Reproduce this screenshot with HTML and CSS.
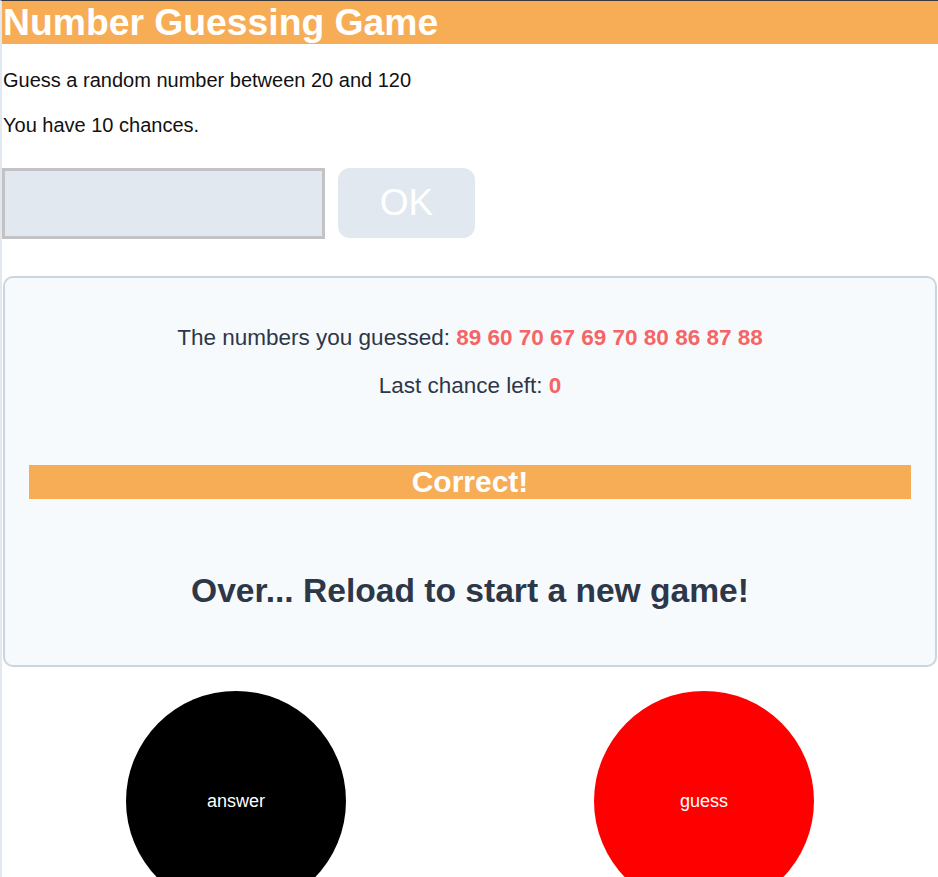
FILE: index.html
```html
<!DOCTYPE html>
<html lang="en">
<head>
<meta charset="utf-8">
<title>Number Guessing Game</title>
<link rel="stylesheet" href="styles.css">
</head>
<body>
<h1 class="title">Number Guessing Game</h1>
<p class="intro">Guess a random number between 20 and 120</p>
<p class="intro second">You have 10 chances.</p>
<div class="form">
  <input class="guess-input" type="text">
  <button class="ok-btn">OK</button>
</div>
<section class="panel">
  <p class="stat">The numbers you guessed: <span class="hl">89 60 70 67 69 70 80 86 87 88</span></p>
  <p class="stat">Last chance left: <span class="hl">0</span></p>
  <div class="result">Correct!</div>
  <h2 class="over">Over... Reload to start a new game!</h2>
</section>
<div class="circles">
  <div class="cell"><div class="circle answer">answer</div></div>
  <div class="cell"><div class="circle guess">guess</div></div>
</div>
</body>
</html>
```
FILE: styles.css
```css
html, body {
  margin: 0;
  padding: 0;
}
body {
  font-family: "Liberation Sans", Arial, sans-serif;
  color: #111;
  border-top: 1px solid #3a3a3a;
  border-left: 2px solid #e2e8f0;
  min-height: 876px;
  box-sizing: border-box;
  overflow: hidden;
}
.title {
  margin: 0;
  background: #f6ad55;
  color: #fff;
  font-size: 37.3px;
  font-weight: bold;
  line-height: 43px;
  height: 43px;
  padding-left: 1px;
}
.intro {
  font-size: 20px;
  margin: 25px 0 0 1px;
  line-height: 22px;
}
.intro.second {
  margin-top: 23px;
}
.form {
  display: flex;
  gap: 13px;
  margin-top: 32px;
}
.guess-input {
  width: 323px;
  height: 71px;
  box-sizing: border-box;
  border: 3px solid #c3c3c6;
  background: #e2e8f0;
  margin: 0;
  font-size: 24px;
}
.ok-btn {
  width: 137px;
  height: 70px;
  border: none;
  border-radius: 12px;
  background: #e2e8f0;
  color: #fff;
  font-family: "Liberation Sans", Arial, sans-serif;
  font-size: 37px;
  padding: 0;
}
.panel {
  margin: 37px 1px 0 1px;
  border: 2px solid #cbd5e0;
  border-radius: 10px;
  background: #f7fafc;
  padding: 47px 24px 55px 24px;
  text-align: center;
  color: #2d3748;
}
.stat {
  font-size: 22.5px;
  line-height: 26px;
  margin: 0 0 22px 0;
}
.hl {
  color: #f56565;
  font-weight: bold;
}
.result {
  margin-top: 66px;
  background: #f6ad55;
  color: #fff;
  font-weight: bold;
  font-size: 30px;
  line-height: 34px;
  height: 34px;
}
.over {
  margin: 72px 0 0 0;
  font-size: 33.6px;
  line-height: 39px;
}
.circles {
  display: flex;
  margin-top: 24px;
}
.cell {
  flex: 1;
  display: flex;
  justify-content: center;
}
.circle {
  width: 220px;
  height: 220px;
  border-radius: 50%;
  display: flex;
  align-items: center;
  justify-content: center;
  color: #fff;
  font-size: 18px;
}
.answer { background: #000; }
.guess { background: #ff0000; }
```
